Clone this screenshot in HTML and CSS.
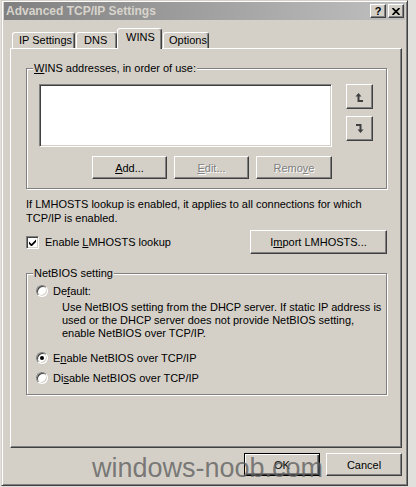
FILE: index.html
```html
<!DOCTYPE html>
<html>
<head>
<meta charset="utf-8">
<title>Advanced TCP/IP Settings</title>
<link rel="stylesheet" href="styles.css">
</head>
<body>
<div class="window">
  <div class="titlebar">
    <span class="title">Advanced TCP/IP Settings</span>
    <div class="title-btns">
      <span class="tbtn help">?</span>
      <span class="tbtn close"><svg width="8" height="7" viewBox="0 0 8 7"><path d="M0.5 0 L7.5 7 M7.5 0 L0.5 7" stroke="#000" stroke-width="1.7"/></svg></span>
    </div>
  </div>
  <div class="tabs">
    <div class="tab tab-ip">IP Settings</div>
    <div class="tab tab-dns">DNS</div>
    <div class="tab tab-wins active">WINS</div>
    <div class="tab tab-options">Options</div>
  </div>
  <div class="panel">
    <fieldset class="group group-wins">
      <legend><u>W</u>INS addresses, in order of use:</legend>
      <div class="group-body wins-body">
        <div class="list-row">
          <div class="listbox"></div>
          <div class="arrows">
            <button class="btn arrow"><svg class="arrow-icon" width="9" height="10" viewBox="0 0 9 10"><path d="M0.5 4.5 L3.5 1 L6.5 4.5 Z M2.5 4 H4.5 V8 H8 V10 H2.5 Z" fill="#404040"/></svg></button>
            <button class="btn arrow"><svg class="arrow-icon down" width="9" height="10" viewBox="0 0 9 10"><path d="M0.5 4.5 L3.5 1 L6.5 4.5 Z M2.5 4 H4.5 V8 H8 V10 H2.5 Z" fill="#404040"/></svg></button>
          </div>
        </div>
        <div class="list-actions">
          <button class="btn act"><span><u>A</u>dd...</span></button>
          <button class="btn act disabled"><span><u>E</u>dit...</span></button>
          <button class="btn act act-wide disabled"><span>Remo<u>v</u>e</span></button>
        </div>
      </div>
    </fieldset>
    <p class="note">If LMHOSTS lookup is enabled, it applies to all connections for which<br>TCP/IP is enabled.</p>
    <div class="lm-row">
      <label class="check"><span class="checkbox"><svg width="7" height="7" viewBox="0 0 7 7"><polygon points="0,2.5 2.5,5 7,0.5 7,3 2.5,7.5 0,5" fill="#000"/></svg></span><span>Enable <u>L</u>MHOSTS lookup</span></label>
      <button class="btn btn-import"><span>I<u>m</u>port LMHOSTS...</span></button>
    </div>
    <fieldset class="group group-netbios">
      <legend>NetBIOS setting</legend>
      <div class="group-body netbios-body">
        <div class="radio-row"><span class="radio"></span><span>De<u>f</u>ault:</span></div>
        <p class="radio-desc">Use NetBIOS setting from the DHCP server. If static IP address is<br>used or the DHCP server does not provide NetBIOS setting,<br>enable NetBIOS over TCP/IP.</p>
        <div class="radio-row enable"><span class="radio checked"></span><span>E<u>n</u>able NetBIOS over TCP/IP</span></div>
        <div class="radio-row disable"><span class="radio"></span><span>Di<u>s</u>able NetBIOS over TCP/IP</span></div>
      </div>
    </fieldset>
  </div>
  <div class="footer">
    <button class="btn foot default">OK</button>
    <button class="btn foot">Cancel</button>
  </div>
</div>
<div class="watermark">windows-noob.com</div>
</body>
</html>
```

FILE: styles.css
```css
* { box-sizing: border-box; }
html, body { margin: 0; padding: 0; }
body {
  width: 416px;
  height: 487px;
  overflow: hidden;
  background: #e2e0dc;
  font-family: "Liberation Sans", Arial, sans-serif;
  font-size: 11px;
  color: #000;
}
u { text-decoration: underline; text-underline-offset: 1px; }

.window {
  margin-left: 1px;
  width: 407px;
  height: 486px;
  background: #d4d0c8;
  border: 1px solid;
  border-color: #d4d0c8 #404040 #404040 #d4d0c8;
  box-shadow: inset 1px 1px #fff, inset -1px -1px #808080;
  padding: 1px 2px 2px 2px;
}

.titlebar {
  height: 18px;
  display: flex;
  align-items: center;
  justify-content: space-between;
  padding: 0 1px 0 2px;
  background: linear-gradient(to right, #808080, #c0c0c0);
}
.title {
  font-weight: bold;
  font-size: 12px;
  color: #d8d4cc;
}
.title-btns { display: flex; gap: 2px; }
.tbtn {
  width: 16px;
  height: 14px;
  display: flex;
  align-items: center;
  justify-content: center;
  background: #d4d0c8;
  border: 1px solid;
  border-color: #fff #404040 #404040 #fff;
  box-shadow: inset -1px -1px #808080;
  font-weight: bold;
  font-size: 11px;
  line-height: 1;
}

.tabs {
  display: flex;
  align-items: flex-end;
  height: 20px;
  margin: 8px 0 0 8px;
}
.tab {
  height: 16px;
  padding-left: 6px;
  line-height: 14px;
  white-space: nowrap;
  border: 1px solid;
  border-bottom: none;
  border-color: #fff #404040 transparent #fff;
  border-radius: 3px 3px 0 0;
  box-shadow: inset -1px 0 #808080;
}
.tab-ip { width: 63px; margin-right: 1px; }
.tab-dns { width: 41px; padding-left: 7px; }
.tab-wins { width: 45px; margin-right: 1px; }
.tab-options { width: 46px; padding-left: 5px; }
.tab.active {
  position: relative;
  height: 21px;
  margin-bottom: -1px;
  padding-left: 8px;
  line-height: 16px;
  background: #d4d0c8;
}

.panel {
  height: 400px;
  margin: 0 3px 0 6px;
  border: 1px solid;
  border-color: #fff #404040 #404040 #fff;
  box-shadow: inset -1px -1px #808080;
  padding: 12px 14px 0 15px;
}

.group {
  margin: 0;
  padding: 0;
  min-width: 0;
  border: 1px solid #808080;
  box-shadow: 1px 1px 0 #fff, inset 1px 1px 0 #fff;
}
.group legend {
  margin-left: 6px;
  padding: 0 1px;
  line-height: 14px;
  background: #d4d0c8;
}
.wins-body { padding: 9px 13px 9px 12px; }
.list-row { display: flex; }
.listbox {
  width: 293px;
  height: 63px;
  background: #fff;
  border: 1px solid;
  border-color: #808080 #fff #fff #808080;
  box-shadow: inset 1px 1px #404040, inset -1px -1px #d4d0c8;
}
.arrows {
  display: flex;
  flex-direction: column;
  gap: 7px;
  margin-left: 14px;
}

.btn {
  display: flex;
  align-items: center;
  justify-content: center;
  padding: 0;
  margin: 0;
  font-family: inherit;
  font-size: 11px;
  color: #000;
  background: #d4d0c8;
  border: 1px solid;
  border-color: #fff #404040 #404040 #fff;
  box-shadow: inset -1px -1px #808080;
  border-radius: 0;
}
.btn.disabled {
  color: #808080;
  text-shadow: 1px 1px 0 #fff;
}
.arrow { width: 27px; height: 25px; }
.arrow-icon.down { transform: rotate(180deg); }

.list-actions {
  display: flex;
  justify-content: flex-end;
  gap: 7px;
  width: 293px;
  margin-top: 9px;
}
.act { width: 75px; height: 23px; }
.act-wide { width: 76px; }

.note {
  margin: 8px 0 0;
  line-height: 14px;
}

.lm-row {
  display: flex;
  align-items: center;
  justify-content: space-between;
  margin-top: 5px;
  height: 24px;
}
.check {
  display: flex;
  align-items: center;
  gap: 6px;
}
.checkbox {
  width: 13px;
  height: 13px;
  display: flex;
  align-items: center;
  justify-content: center;
  background: #fff;
  border: 1px solid;
  border-color: #808080 #fff #fff #808080;
  box-shadow: inset 1px 1px #404040, inset -1px -1px #d4d0c8;
}
.btn-import { width: 137px; height: 24px; }

.group-netbios { margin-top: 12px; }
.netbios-body { padding: 4px 0 9px 9px; }
.radio-row {
  display: flex;
  align-items: center;
  gap: 5px;
  height: 14px;
}
.radio {
  width: 12px;
  height: 12px;
  border-radius: 50%;
  background: #fff;
  border: 1px solid;
  border-color: #808080 #fff #fff #808080;
  box-shadow: inset 1px 1px #404040, inset -1px -1px #d4d0c8;
  display: flex;
  align-items: center;
  justify-content: center;
}
.radio.checked::after {
  content: "";
  width: 4px;
  height: 4px;
  border-radius: 50%;
  background: #000;
}
.radio-desc {
  margin: 3px 0 0 26px;
  line-height: 13px;
}
.radio-row.enable { margin-top: 11px; }
.radio-row.disable { margin-top: 6px; }

.footer {
  display: flex;
  justify-content: flex-end;
  gap: 6px;
  margin: 5px 3px 0 0;
}
.foot { width: 76px; height: 23px; }
.foot.default {
  border: 1px solid #000;
  box-shadow: inset 1px 1px #fff, inset -1px -1px #404040, inset -2px -2px #808080;
}

.watermark {
  position: absolute;
  left: 92px;
  top: 455px;
  font-family: "Liberation Sans", Arial, sans-serif;
  font-size: 27px;
  line-height: 27px;
  color: rgba(96, 96, 96, 0.8);
  white-space: nowrap;
}
```
